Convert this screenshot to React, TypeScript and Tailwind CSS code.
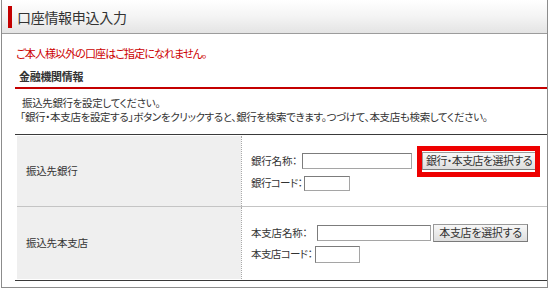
import React from "react";

const jp = "font-['Noto_Sans_CJK_JP','Noto_Sans_CJK_SC',sans-serif] [font-feature-settings:'palt']";

function TextInput({ className }: { className: string }) {
  return (
    <input
      type="text"
      className={`border border-[#a5a5a5] border-t-[#7c7c7c] border-l-[#7c7c7c] bg-white outline-none ${className}`}
    />
  );
}

function PickButton({ label, className }: { label: string; className: string }) {
  return (
    <button
      type="button"
      className={`flex items-center justify-center border border-[#9a9a9a] border-b-[#7a7a7a] border-r-[#7a7a7a] bg-linear-to-b from-[#f8f8f8] to-[#dedede] text-[11px] leading-none text-[#333] ${className}`}
    >
      {label}
    </button>
  );
}

export default function App() {
  return (
    <div className={`h-[289px] w-[549px] bg-white text-[#333] ${jp}`}>
      <div className="ml-[1px] flex h-[288px] w-[547px] flex-col border-x border-b border-[#8c8c8c]">
        <header className="flex h-[34px] items-center border-b border-[#9c9c9c] bg-linear-to-b from-white via-[#f4f4f4] to-[#e4e4e4] pl-[6px]">
          <span className="h-[22px] w-[4px] bg-[#c40000]" />
          <h1 className="ml-[5px] text-[14px] leading-none tracking-[-0.3px] text-[#333]">
            口座情報申込入力
          </h1>
        </header>

        <div className="flex flex-col pl-[13px]">
          <p className="mt-[12px] pl-[1px] text-[11px] leading-[14px] tracking-[-0.9px] text-[#cc0000]">
            ご本人様以外の口座はご指定になれません。
          </p>
          <h2 className="mt-[9px] pl-[4px] text-[11px] font-bold leading-[14px] tracking-[-0.3px] text-[#333]">
            金融機関情報
          </h2>
          <div className="mt-[4px] h-[2px] bg-[#c40000]" />

          <div className="mt-[7px] pl-[5px] text-[10.5px] leading-[14px] tracking-[-0.35px]">
            <p className="pl-[2px]">振込先銀行を設定してください。</p>
            <p>
              「銀行・本支店を設定する」ボタンをクリックすると、銀行を検索できます。つづけて、本支店も検索してください。
            </p>
          </div>

          <div className="mt-[10px] h-px bg-[#3a3a3a]" />

          <div className="flex flex-col pl-[2px] pt-px text-[10.5px] tracking-[-0.2px]">
            <div className="flex h-[71px] border-b border-[#c4c4c4]">
              <div className="flex w-[224px] items-center bg-[#efefef] pl-[9px]">振込先銀行</div>
              <div className="flex flex-1 flex-col justify-center gap-[6px] border-l border-dotted border-[#a8a8a8] pl-[9px]">
                <div className="flex h-[18px] items-center">
                  <span className="w-[51px] whitespace-nowrap">銀行名称：</span>
                  <TextInput className="h-[16px] w-[110px]" />
                  <div className="relative ml-[10px]">
                    <PickButton label="銀行・本支店を選択する" className="h-[18px] w-[114px] tracking-[-0.6px]" />
                    <span className="pointer-events-none absolute -top-[6px] -right-[4px] -bottom-[7px] -left-[5px] border-[5px] border-[#ee0000]" />
                  </div>
                </div>
                <div className="flex h-[15px] items-center">
                  <span className="w-[53px] whitespace-nowrap tracking-[-0.6px]">銀行コード：</span>
                  <TextInput className="h-[15px] w-[46px]" />
                </div>
              </div>
            </div>

            <div className="flex h-[72px]">
              <div className="flex w-[224px] items-center bg-[#efefef] pl-[9px]">振込先本支店</div>
              <div className="flex flex-1 flex-col justify-center gap-[4px] border-l border-dotted border-[#a8a8a8] pl-[9px]">
                <div className="flex h-[18px] items-center">
                  <span className="w-[66px] whitespace-nowrap">本支店名称：</span>
                  <TextInput className="h-[16px] w-[114px]" />
                  <PickButton label="本支店を選択する" className="ml-[2px] h-[18px] w-[95px] tracking-[-0.3px]" />
                </div>
                <div className="flex h-[17px] items-center">
                  <span className="w-[64px] whitespace-nowrap tracking-[-0.6px]">本支店コード：</span>
                  <TextInput className="h-[17px] w-[45px]" />
                </div>
              </div>
            </div>
          </div>

          <div className="mt-px h-px bg-[#3a3a3a]" />
        </div>
      </div>
    </div>
  );
}
